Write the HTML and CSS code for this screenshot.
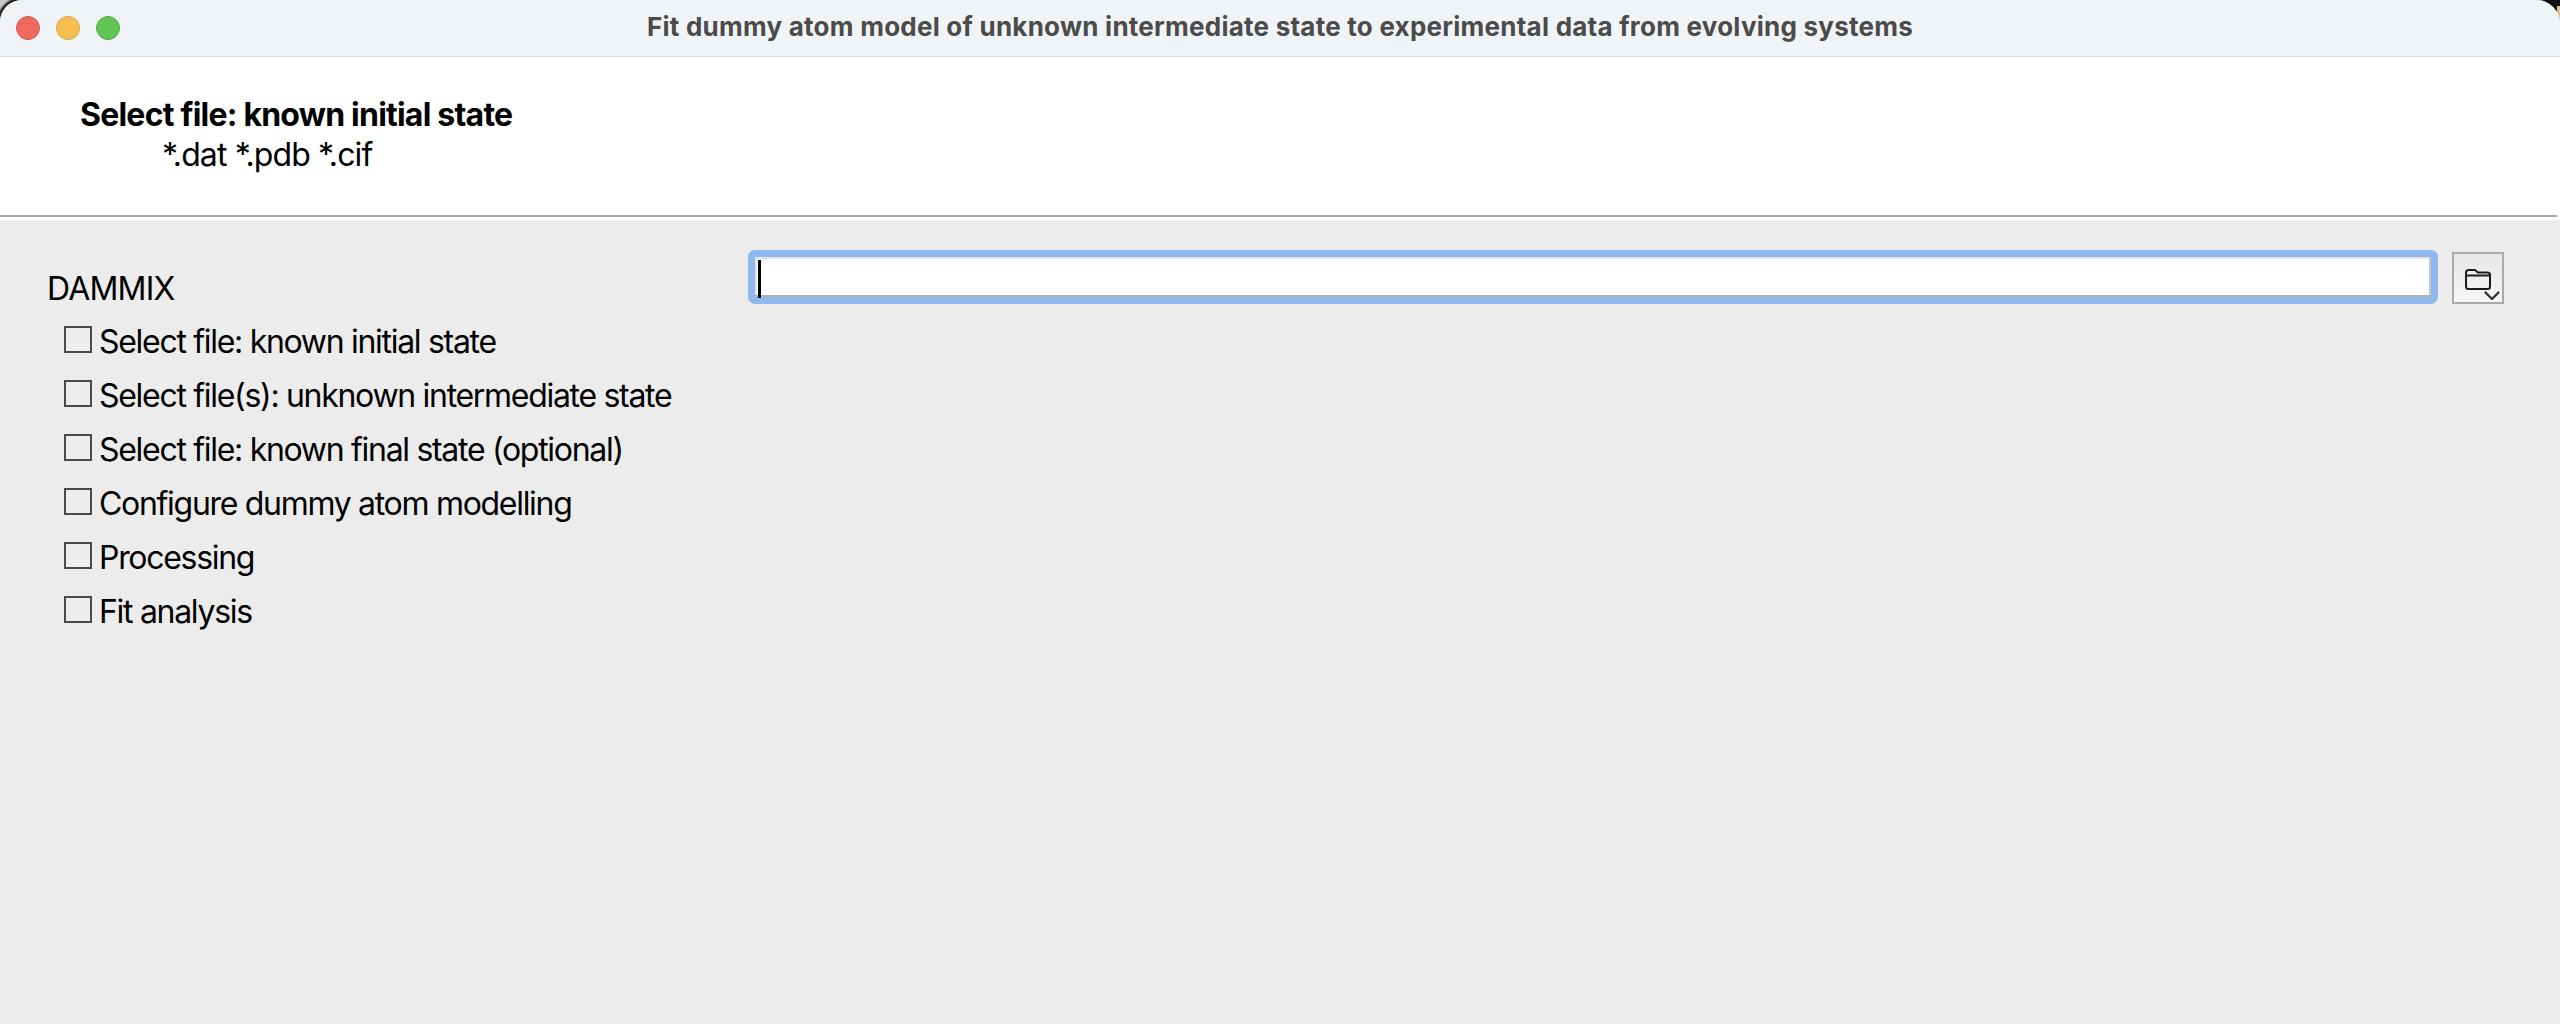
FILE: index.html
```html
<!DOCTYPE html>
<html lang="en">
<head>
<meta charset="utf-8">
<title>DAMMIX</title>
<link rel="stylesheet" href="styles.css">
</head>
<body>
<div class="window">
  <header class="titlebar">
    <div class="lights">
      <span class="light red"></span>
      <span class="light yellow"></span>
      <span class="light green"></span>
    </div>
    <div class="title">Fit dummy atom model of unknown intermediate state to experimental data from evolving systems</div>
  </header>
  <section class="banner">
    <div class="banner-title">Select file: known initial state</div>
    <div class="banner-sub">*.dat *.pdb *.cif</div>
  </section>
  <div class="rule-wrap"><div class="rule"></div></div>
  <main class="content">
    <nav class="steps">
      <div class="steps-title">DAMMIX</div>
      <label class="step"><span class="box"></span>Select file: known initial state</label>
      <label class="step"><span class="box"></span>Select file(s): unknown intermediate state</label>
      <label class="step"><span class="box"></span>Select file: known final state (optional)</label>
      <label class="step"><span class="box"></span>Configure dummy atom modelling</label>
      <label class="step"><span class="box"></span>Processing</label>
      <label class="step"><span class="box"></span>Fit analysis</label>
    </nav>
    <div class="picker">
      <div class="field"><span class="caret"></span></div>
      <button class="browse" type="button" aria-label="Browse">
        <svg width="38" height="36" viewBox="0 0 38 36" fill="none" stroke="#1c1c1c" stroke-width="2" stroke-linecap="round" stroke-linejoin="round">
          <path d="M2 7.500C2 6 3 5 4.500 5H11L14 7.500H23.500C25 7.500 26 8.500 26 10V21.500C26 23 25 24 23.500 24H4.500C3 24 2 23 2 21.500Z"/>
          <path d="M2 10.500H26"/>
          <path d="M21.500 27.500L28 34L34.500 27.500" stroke="#333" stroke-width="2.400"/>
        </svg>
      </button>
    </div>
  </main>
</div>
</body>
</html>
```
FILE: styles.css
```css
* { box-sizing: border-box; }
html, body { margin: 0; height: 100%; }
body {
  overflow: hidden;
  font-family: Inter, "Liberation Sans", sans-serif;
  color: #000;
  background:
    radial-gradient(circle at 24px 24px, #1b1b1b 0 26px, #c9c9c9 29px) left top / 30px 30px no-repeat,
    linear-gradient(#111 0 6px, #dcc196 6px 20px, #f1f4f7 20px) right top / 3px 30px no-repeat,
    linear-gradient(#111 0 30px, #ececec 30px);
}

.window {
  display: flex;
  flex-direction: column;
  height: 1024px;
  background: #ececec;
  border-radius: 22px 24px 0 0;
  overflow: hidden;
}

.titlebar {
  display: flex;
  align-items: center;
  height: 57px;
  flex: none;
  padding-left: 16px;
  background: #f1f4f7;
  border-bottom: 1px solid #dcdcdc;
  position: relative;
}
.lights { display: flex; gap: 16px; position: relative; z-index: 1; }
.light { width: 24px; height: 24px; border-radius: 50%; border: 1px solid; }
.red { background: #ee6a5f; border-color: #d9574d; }
.yellow { background: #f5bf4f; border-color: #d9a33f; }
.green { background: #61c554; border-color: #52ab46; }
.title {
  position: absolute;
  left: 0; right: 0; top: 0; bottom: 3px;
  display: flex;
  align-items: center;
  justify-content: center;
  font-size: 26px;
  font-weight: 700;
  letter-spacing: 0.24px;
  color: #4b4b4b;
}

.banner {
  flex: none;
  height: 158px;
  padding: 38px 0 0 80px;
  background: #fff;
}
.banner-title { font-size: 32px; font-weight: 700; line-height: 40px; letter-spacing: -0.78px; }
.banner-sub { font-size: 32px; line-height: 40px; margin-left: 82px; letter-spacing: -0.88px; }

.rule-wrap { flex: none; height: 5px; background: #fff; }
.rule { height: 2px; margin-right: 3px; background: #a9a9a9; }

.content {
  flex: 1;
  display: flex;
  align-items: flex-start;
  padding: 30px 56px 0 48px;
}
.steps { width: 700px; flex: none; font-size: 32px; letter-spacing: -1.3px; }
.steps-title { line-height: 40px; margin-top: 19px; margin-bottom: 5px; margin-left: -1px; letter-spacing: -0.8px; }
.step { display: flex; align-items: center; height: 54px; padding-left: 16px; }
.box {
  width: 28px; height: 27px; flex: none; margin-right: 7px; margin-top: -4px;
  border: 2px solid #4a4a4a; background: #eee;
}

.picker { flex: 1; display: flex; align-items: flex-start; gap: 14px; }
.field {
  flex: 1;
  height: 54px;
  padding: 3px 3px 0 3px;
  background: #fff;
  border: 7px solid #8fb8ef;
  border-radius: 7px;
  box-shadow: inset 0 -2px 0 #b0b0b0, inset 2px 0 0 #e4e4e4, inset -2px 0 0 #c4c4c4, inset 0 2px 0 #e4e4e4;
}
.caret { display: block; width: 3px; height: 38px; background: #000; }
.browse {
  width: 52px; height: 52px; margin-top: 2px; padding: 9px 0 0 10px;
  display: block;
  border: 2px solid #aaa;
  background: linear-gradient(#e7e7e7, #f6f6f6);
}
.browse svg { display: block; }
```
